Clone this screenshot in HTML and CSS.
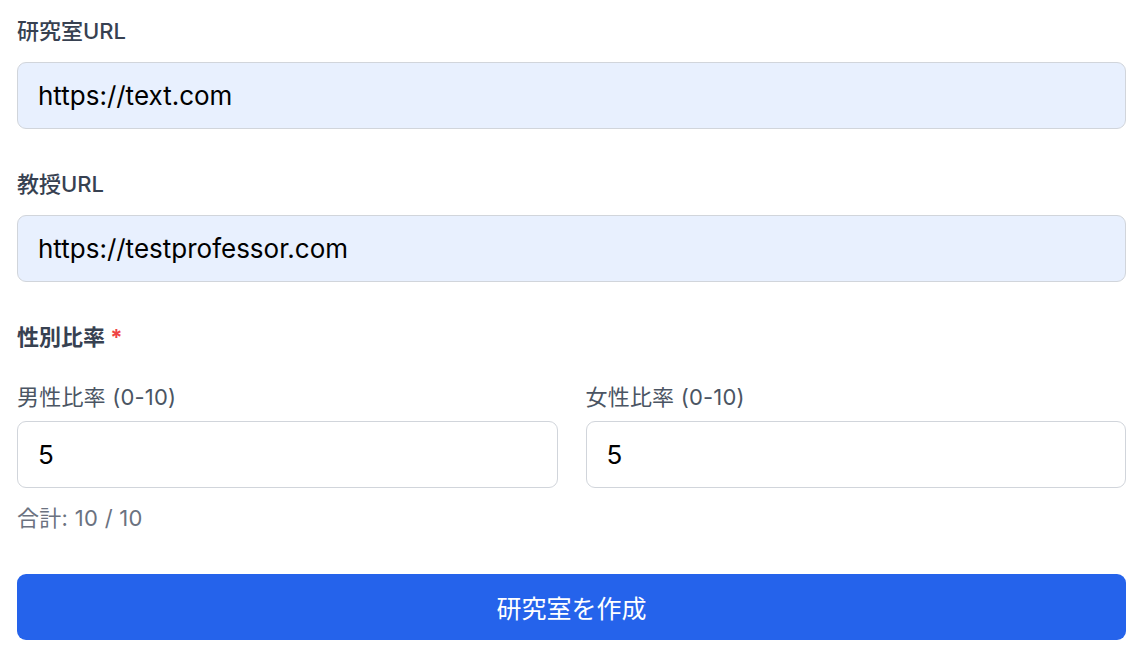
FILE: index.html
```html
<!DOCTYPE html>
<html lang="ja">
<head>
<meta charset="utf-8">
<link rel="stylesheet" href="styles.css">
</head>
<body>
<form class="form">
  <div class="field">
    <label class="label">研究室URL</label>
    <input class="input autofill" type="text" value="https://text.com">
  </div>
  <div class="field">
    <label class="label">教授URL</label>
    <input class="input autofill" type="text" value="https://testprofessor.com">
  </div>
  <div class="field ratio">
    <div class="label strong">性別比率 <span class="req">*</span></div>
    <div class="cols">
      <div class="col">
        <label class="sublabel">男性比率 (0-10)</label>
        <input class="input" type="text" value="5">
      </div>
      <div class="col">
        <label class="sublabel">女性比率 (0-10)</label>
        <input class="input" type="text" value="5">
      </div>
    </div>
    <div class="total">合計: 10 / 10</div>
  </div>
  <button class="submit" type="button">研究室を作成</button>
</form>
</body>
</html>
```
FILE: styles.css
```css
* { box-sizing: border-box; }
body {
  margin: 0;
  background: #ffffff;
  font-family: "Inter", "Noto Sans CJK JP", sans-serif;
}
.form {
  width: 1109px;
  margin-left: 17px;
  padding-top: 16px;
  display: flex;
  flex-direction: column;
  gap: 40px;
}
.field {
  display: flex;
  flex-direction: column;
  gap: 16px;
}
.label {
  font-size: 22px;
  line-height: 30px;
  font-weight: 500;
  color: #374151;
}
.label.strong { font-weight: 700; }
.req { color: #ef4444; }
.input {
  height: 67px;
  width: 100%;
  border: 1px solid #d1d5db;
  border-radius: 9px;
  padding: 0 20px;
  font-family: "Inter", "Noto Sans CJK JP", sans-serif;
  font-size: 26px;
  color: #000;
  background: #fff;
  outline: none;
}
.input.autofill { background: #e8f0fe; }
.ratio { gap: 0; }
.cols {
  display: grid;
  grid-template-columns: 1fr 1fr;
  column-gap: 28px;
  margin-top: 30px;
}
.col {
  display: flex;
  flex-direction: column;
  gap: 9px;
}
.sublabel {
  font-size: 22px;
  line-height: 30px;
  color: #4b5563;
  letter-spacing: 0.2px;
}
.total {
  margin-top: 15px;
  font-size: 22px;
  line-height: 30px;
  color: #6b7280;
  letter-spacing: 0.3px;
}
.submit {
  height: 66px;
  margin-top: 1px;
  border: none;
  border-radius: 9px;
  background: #2563eb;
  color: #fff;
  font-family: "Inter", "Noto Sans CJK JP", sans-serif;
  font-size: 25px;
}
```
